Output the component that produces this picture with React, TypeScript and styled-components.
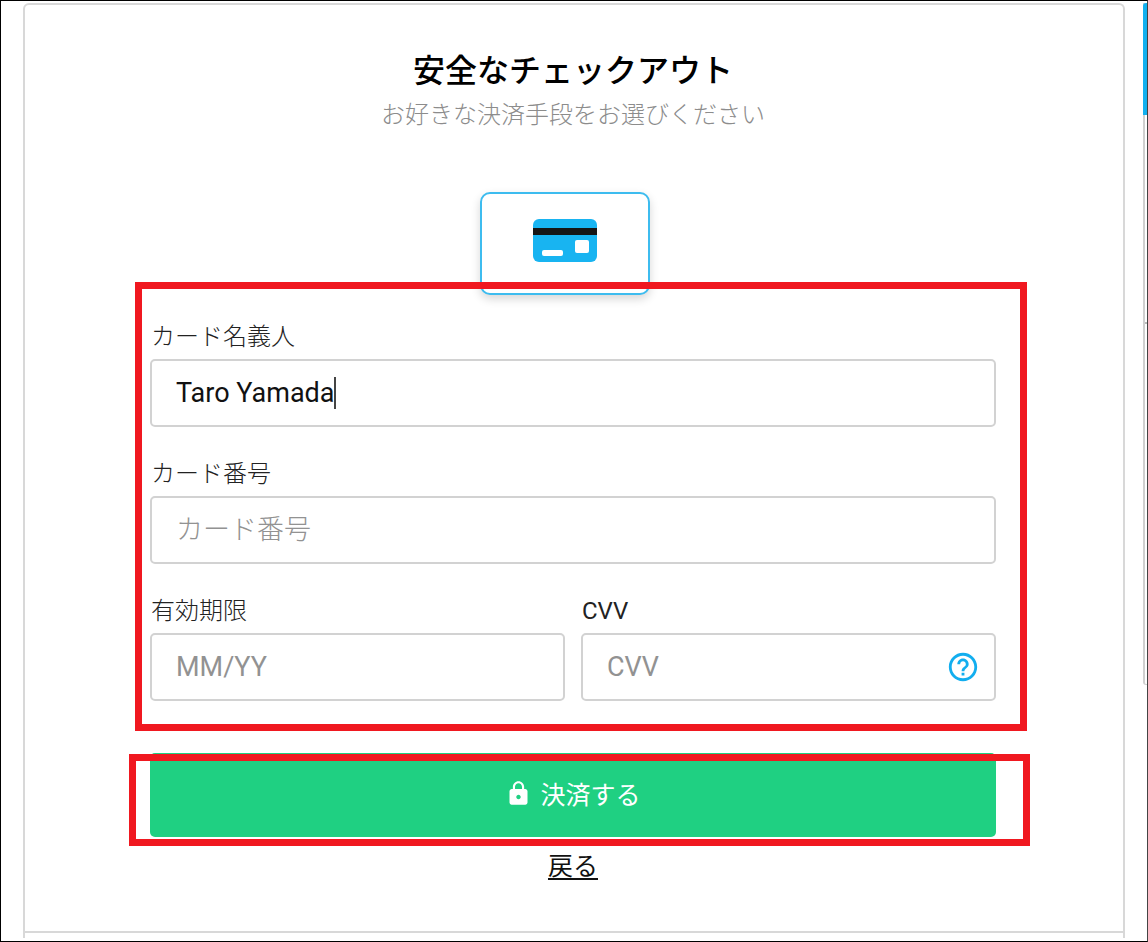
import React from 'react';
import styled, { createGlobalStyle } from 'styled-components';
import { MdHelpOutline, MdLock } from 'react-icons/md';

const GlobalStyle = createGlobalStyle`
  *, *::before, *::after { box-sizing: border-box; }
  body {
    margin: 0;
    background: #fff;
    color: #111;
    font-family: Roboto, 'Noto Sans CJK JP', sans-serif;
  }
  button, input { font: inherit; color: inherit; }
`;

const Page = styled.div`
  display: flex;
  justify-content: space-between;
  align-items: flex-start;
  min-height: 100vh;
  padding: 2px 0 2px 22px;
  border: 1px solid #000;
  border-right-color: #444;
`;

const Panel = styled.main`
  flex: 1;
  margin-right: 18px;
  padding-bottom: 5px;
  border: 2px solid #d8d8d8;
  border-bottom: 0;
  border-radius: 6px 6px 0 0;
`;

const PanelBody = styled.div`
  display: flex;
  flex-direction: column;
  align-items: center;
  padding: 48px 127px 46px 125px;
  border-bottom: 2px solid #d8d8d8;
`;

const Title = styled.h1`
  margin: 0;
  font-size: 32px;
  font-weight: 500;
  line-height: 36px;
  color: #000;
`;

const Subtitle = styled.p`
  margin: 8px 0 59px;
  font-size: 24px;
  font-weight: 300;
  line-height: 36px;
  color: #8c8c8c;
`;

const MethodButton = styled.button`
  display: flex;
  justify-content: center;
  width: 170px;
  height: 103px;
  margin-right: 16px;
  padding: 25px 0 0;
  border: 2px solid #3dbcef;
  border-radius: 10px;
  background: #fff;
  box-shadow: 0 4px 10px rgba(0, 0, 0, 0.16);
`;

const Marked = styled.div<{ $inset: string }>`
  position: relative;
  width: 100%;

  &::after {
    content: '';
    position: absolute;
    inset: ${({ $inset }) => $inset};
    border: 7px solid #f01820;
    pointer-events: none;
  }
`;

const Form = styled.form`
  width: 100%;
`;

const Fields = styled.div`
  display: grid;
  grid-template-columns: 1fr 1fr;
  column-gap: 16px;
  padding-top: 23px;
`;

const Field = styled.div<{ $wide?: boolean }>`
  grid-column: ${({ $wide }) => ($wide ? '1 / -1' : 'auto')};
  padding-bottom: 28px;
`;

const Label = styled.label<{ $strong?: boolean }>`
  display: block;
  height: 41px;
  padding-left: 1px;
  font-size: 24px;
  font-weight: ${({ $strong }) => ($strong ? 400 : 300)};
  line-height: 38px;
  color: #222;
`;

const InputWrap = styled.div`
  position: relative;
`;

const Input = styled.input`
  display: block;
  width: 100%;
  height: 68px;
  padding: 0 24px;
  border: 2px solid #d2d2d2;
  border-radius: 5px;
  outline: 0;
  background: #fff;
  font-size: 27px;

  &::placeholder {
    color: #929292;
    opacity: 1;
  }

  &:lang(ja)::placeholder {
    font-weight: 300;
  }
`;

const Caret = styled.span`
  position: absolute;
  top: 18px;
  left: 184px;
  width: 2px;
  height: 32px;
  background: #444;
`;

const HelpButton = styled.button`
  position: absolute;
  top: 17px;
  right: 16px;
  display: flex;
  padding: 0;
  border: 0;
  background: none;
  color: #12aeef;
`;

const SubmitRow = styled.div`
  padding-top: 24px;
`;

const SubmitButton = styled.button`
  display: flex;
  align-items: center;
  justify-content: center;
  gap: 8px;
  width: 100%;
  height: 84px;
  padding: 0 0 4px;
  border: 0;
  border-radius: 5px;
  background: #1fd082;
  color: #fff;
  font-size: 25px;
`;

const BackLink = styled.a`
  margin-top: 12px;
  font-size: 25px;
  line-height: 36px;
  color: #111;
  text-decoration: underline;
  text-decoration-thickness: 2px;
  text-underline-offset: 3px;
`;

const Summary = styled.aside`
  width: 4px;
  height: 682px;
  border-left: 2px solid #d0d0d0;
  border-bottom: 1px solid #d0d0d0;
  border-bottom-left-radius: 3px;
`;

const SummaryHeader = styled.div`
  height: 112px;
  margin-left: -2px;
  border-radius: 3px 0 0 0;
  background: #12b0ef;
`;

const SummaryRow = styled.div`
  height: 209px;
  border-bottom: 2px solid #bbb;
`;

function CardIcon() {
  return (
    <svg width="64" height="43" viewBox="0 0 64 43" aria-hidden="true">
      <rect width="64" height="43" rx="6" fill="#18b4f1" />
      <rect y="9" width="64" height="7" fill="#151515" />
      <rect x="9" y="31" width="21" height="6" rx="2" fill="#fff" />
      <rect x="42" y="21" width="14" height="13" rx="2" fill="#fff" />
    </svg>
  );
}

export default function App() {
  return (
    <>
      <GlobalStyle />
      <Page lang="ja">
        <Panel>
          <PanelBody>
            <Title>安全なチェックアウト</Title>
            <Subtitle>お好きな決済手段をお選びください</Subtitle>
            <MethodButton type="button" aria-label="クレジットカード">
              <CardIcon />
            </MethodButton>
            <Form onSubmit={(e) => e.preventDefault()}>
              <Marked $inset="-13px -31px -2px -15px">
                <Fields>
                  <Field $wide>
                    <Label htmlFor="holder">カード名義人</Label>
                    <InputWrap>
                      <Input id="holder" defaultValue="Taro Yamada" />
                      <Caret />
                    </InputWrap>
                  </Field>
                  <Field $wide>
                    <Label htmlFor="number">カード番号</Label>
                    <Input id="number" placeholder="カード番号" />
                  </Field>
                  <Field>
                    <Label htmlFor="expiry">有効期限</Label>
                    <Input id="expiry" lang="en" placeholder="MM/YY" />
                  </Field>
                  <Field>
                    <Label htmlFor="cvv" $strong>CVV</Label>
                    <InputWrap>
                      <Input id="cvv" lang="en" placeholder="CVV" />
                      <HelpButton type="button" aria-label="CVVについて">
                        <MdHelpOutline size={34} />
                      </HelpButton>
                    </InputWrap>
                  </Field>
                </Fields>
              </Marked>
              <SubmitRow>
                <Marked $inset="1px -34px -9px -21px">
                  <SubmitButton type="submit">
                    <MdLock size={27} />
                    決済する
                  </SubmitButton>
                </Marked>
              </SubmitRow>
            </Form>
            <BackLink href="#">戻る</BackLink>
          </PanelBody>
        </Panel>
        <Summary>
          <SummaryHeader />
          <SummaryRow />
        </Summary>
      </Page>
    </>
  );
}
